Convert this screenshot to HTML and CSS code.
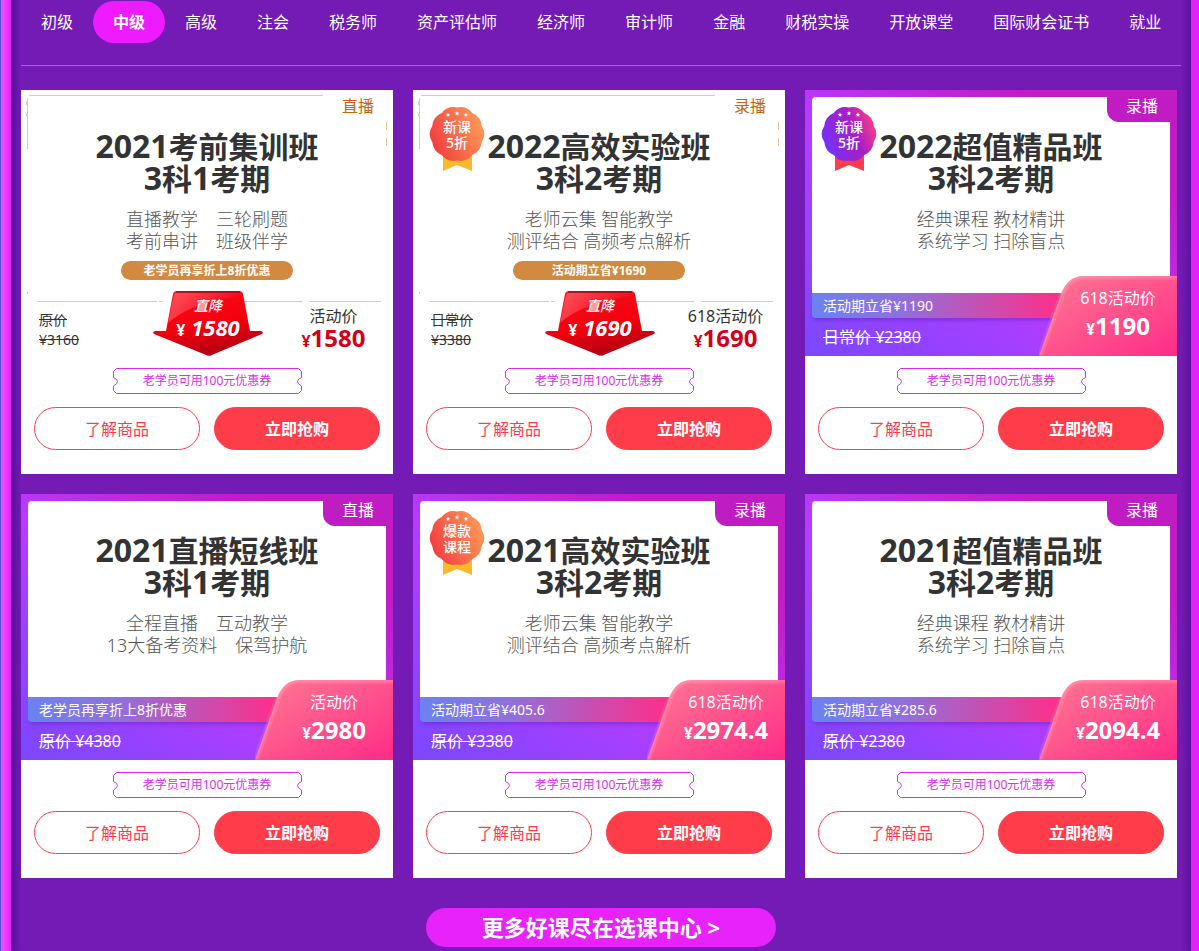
FILE: index.html
```html
<!DOCTYPE html>
<html lang="zh-CN">
<head>
  <meta charset="utf-8">
  <title>课程中心</title>
  <link rel="stylesheet" href="styles.css">
</head>
<body>
  <!-- shared shapes -->
  <svg class="defs" width="0" height="0" aria-hidden="true">
    <defs>
      <linearGradient id="orange" x1="0" y1="0.7" x2="1" y2="0.3">
        <stop offset="0" stop-color="#f23a3f"/>
        <stop offset="1" stop-color="#ff9c57"/>
      </linearGradient>
      <linearGradient id="violet" x1="0" y1="0.7" x2="1" y2="0.3">
        <stop offset="0" stop-color="#6f35f8"/>
        <stop offset="0.6" stop-color="#a81cc8"/>
        <stop offset="1" stop-color="#ff4280"/>
      </linearGradient>
      <linearGradient id="red" x1="0" y1="0" x2="0.3" y2="1">
        <stop offset="0" stop-color="#f5101c"/>
        <stop offset="0.6" stop-color="#f5000f"/>
        <stop offset="1" stop-color="#b80012"/>
      </linearGradient>
      <linearGradient id="shine" x1="0" y1="0" x2="1" y2="0.4">
        <stop offset="0" stop-color="#ff5560"/>
        <stop offset="1" stop-color="#f5000f"/>
      </linearGradient>
      <linearGradient id="pink" x1="0" y1="0" x2="1" y2="1">
        <stop offset="0" stop-color="#ff7a92"/>
        <stop offset="1" stop-color="#ff2c88"/>
      </linearGradient>
      <symbol id="seal" viewBox="0 0 56 65">
        <path d="M14 48H43V65L28 59L14 65Z" fill="currentColor"/>
        <path d="M52.700 36Q52 45.400 43.300 49Q37.300 56.500 28 54.500Q18.700 56.500 12.700 49Q4 45.400 3.300 36Q-2 28 3.300 20Q4 10.600 12.700 7Q18.700 -.5 28 1.500Q37.300 -.5 43.300 7Q52 10.600 52.700 20Q58 28 52.700 36Z" stroke-linejoin="round"/>
        <path d="M19 6.500l.7 1.400 1.500.2-1.100 1 .3 1.600-1.400-.8-1.400.8.3-1.600-1.100-1 1.500-.2zM28 5l.7 1.400 1.500.2-1.100 1 .3 1.600-1.400-.8-1.400.8.3-1.600-1.100-1 1.500-.2zM37 6.500l.7 1.400 1.500.2-1.100 1 .3 1.600-1.400-.8-1.400.8.3-1.600-1.100-1 1.500-.2z" fill="#fff"/>
      </symbol>
      <symbol id="drop" viewBox="0 0 110 65">
        <path d="M24 0H86Q89 0 90 3L97 40H108Q111 41 109 43L60 63.500Q56 66 52 63.500L1 43Q-1 41 2 40H13L20 3Q21 0 24 0Z" fill="url(#red)"/>
        <path d="M24 1H86Q88 1 89 4C60 10 36 14 15 32L21 4Q22 1 24 1Z" fill="url(#shine)"/>
        <path d="M23 1H87" stroke="#9d0a18" stroke-width="1.500"/>
      </symbol>
      <symbol id="ticket" viewBox="0 0 189 26">
        <path d="M.5 9.500V3.500L3.500 .5H185.500L188.500 3.500V9.500Q184.500 11 184.500 13.500T188.500 18V22.500L185.500 25.500H3.500L.5 22.500V18Q4.500 16 4.500 13.500T.5 9.500Z" fill="none" stroke="#da2cf0"/>
      </symbol>
      <symbol id="flag" viewBox="0 0 138 80">
        <path d="M0 80L22 18Q29 0 44 0H138V80Z" fill="url(#pink)"/>
        <path d="M1 79L23 18Q30 1 45 1H138" fill="none" stroke="#fff" stroke-opacity="0.1" stroke-width="6"/>
        <path d="M1 79L23 18Q30 1 45 1H138" fill="none" stroke="#fff" stroke-opacity="0.1" stroke-width="2"/>
      </symbol>
      <symbol id="frame" viewBox="0 0 372 266" preserveAspectRatio="none">
        <path d="M8 5.500H302M6.500 8V59M5.500 11V15M5.500 24V26M365.500 32V40M365.500 48V56M6.500 202V204M16 211.500H136M138 211.500H142M222 211.500H281M288 211.500H360" fill="none" stroke="#f2c596"/>
      </symbol>
    </defs>
  </svg>

  <main class="page">
    <nav class="levels">
      <a href="#">初级</a>
      <a href="#" class="active">中级</a>
      <a href="#">高级</a>
      <a href="#">注会</a>
      <a href="#">税务师</a>
      <a href="#">资产评估师</a>
      <a href="#">经济师</a>
      <a href="#">审计师</a>
      <a href="#">金融</a>
      <a href="#">财税实操</a>
      <a href="#">开放课堂</a>
      <a href="#">国际财会证书</a>
      <a href="#">就业</a>
    </nav>

    <section class="courses">
      <article class="card gold">
        <div class="promo">
          <svg class="frame"><use href="#frame"/></svg>
          <span class="type">直播</span>
          <div class="sheet">
            <h2><span class="n">2021</span>考前集训班<br><span class="n">3</span>科<span class="n">1</span>考期</h2>
            <p class="desc">直播教学　三轮刷题<br>考前串讲　班级伴学</p>
            <p class="pill">老学员再享折上8折优惠</p>
          </div>
          <div class="prices">
            <del>原价<br>¥3160</del>
            <div class="drop">
              <svg><use href="#drop"/></svg>
              <span>直降</span>
              <strong><small>¥</small> 1580</strong>
            </div>
            <div class="now"><span>活动价</span><strong><small>¥</small>1580</strong></div>
          </div>
        </div>
        <div class="coupon"><svg><use href="#ticket"/></svg><span>老学员可用100元优惠券</span></div>
        <div class="actions">
          <button type="button" class="info">了解商品</button>
          <button type="button" class="buy">立即抢购</button>
        </div>
      </article>

      <article class="card gold">
        <div class="promo">
          <svg class="frame"><use href="#frame"/></svg>
          <span class="type">录播</span>
          <div class="badge"><svg><use href="#seal"/></svg><span>新课<br>5折</span></div>
          <div class="sheet">
            <h2><span class="n">2022</span>高效实验班<br><span class="n">3</span>科<span class="n">2</span>考期</h2>
            <p class="desc">老师云集 智能教学<br>测评结合 高频考点解析</p>
            <p class="pill">活动期立省¥1690</p>
          </div>
          <div class="prices">
            <del>日常价<br>¥3380</del>
            <div class="drop">
              <svg><use href="#drop"/></svg>
              <span>直降</span>
              <strong><small>¥</small> 1690</strong>
            </div>
            <div class="now"><span>618活动价</span><strong><small>¥</small>1690</strong></div>
          </div>
        </div>
        <div class="coupon"><svg><use href="#ticket"/></svg><span>老学员可用100元优惠券</span></div>
        <div class="actions">
          <button type="button" class="info">了解商品</button>
          <button type="button" class="buy">立即抢购</button>
        </div>
      </article>

      <article class="card">
        <div class="promo">
          <span class="type">录播</span>
          <div class="badge purple"><svg><use href="#seal"/></svg><span>新课<br>5折</span></div>
          <div class="sheet">
            <h2><span class="n">2022</span>超值精品班<br><span class="n">3</span>科<span class="n">2</span>考期</h2>
            <p class="desc">经典课程 教材精讲<br>系统学习 扫除盲点</p>
          </div>
          <p class="strip">活动期立省¥1190</p>
          <del>日常价 ¥2380</del>
          <div class="flag">
            <svg><use href="#flag"/></svg>
            <div class="now"><span>618活动价</span><strong><small>¥</small>1190</strong></div>
          </div>
        </div>
        <div class="coupon"><svg><use href="#ticket"/></svg><span>老学员可用100元优惠券</span></div>
        <div class="actions">
          <button type="button" class="info">了解商品</button>
          <button type="button" class="buy">立即抢购</button>
        </div>
      </article>

      <article class="card">
        <div class="promo">
          <span class="type">直播</span>
          <div class="sheet">
            <h2><span class="n">2021</span>直播短线班<br><span class="n">3</span>科<span class="n">1</span>考期</h2>
            <p class="desc">全程直播　互动教学<br>13大备考资料　保驾护航</p>
          </div>
          <p class="strip">老学员再享折上8折优惠</p>
          <del>原价 ¥4380</del>
          <div class="flag">
            <svg><use href="#flag"/></svg>
            <div class="now"><span>活动价</span><strong><small>¥</small>2980</strong></div>
          </div>
        </div>
        <div class="coupon"><svg><use href="#ticket"/></svg><span>老学员可用100元优惠券</span></div>
        <div class="actions">
          <button type="button" class="info">了解商品</button>
          <button type="button" class="buy">立即抢购</button>
        </div>
      </article>

      <article class="card">
        <div class="promo">
          <span class="type">录播</span>
          <div class="badge"><svg><use href="#seal"/></svg><span>爆款<br>课程</span></div>
          <div class="sheet">
            <h2><span class="n">2021</span>高效实验班<br><span class="n">3</span>科<span class="n">2</span>考期</h2>
            <p class="desc">老师云集 智能教学<br>测评结合 高频考点解析</p>
          </div>
          <p class="strip">活动期立省¥405.6</p>
          <del>原价 ¥3380</del>
          <div class="flag">
            <svg><use href="#flag"/></svg>
            <div class="now"><span>618活动价</span><strong><small>¥</small>2974.4</strong></div>
          </div>
        </div>
        <div class="coupon"><svg><use href="#ticket"/></svg><span>老学员可用100元优惠券</span></div>
        <div class="actions">
          <button type="button" class="info">了解商品</button>
          <button type="button" class="buy">立即抢购</button>
        </div>
      </article>

      <article class="card">
        <div class="promo">
          <span class="type">录播</span>
          <div class="sheet">
            <h2><span class="n">2021</span>超值精品班<br><span class="n">3</span>科<span class="n">2</span>考期</h2>
            <p class="desc">经典课程 教材精讲<br>系统学习 扫除盲点</p>
          </div>
          <p class="strip">活动期立省¥285.6</p>
          <del>原价 ¥2380</del>
          <div class="flag">
            <svg><use href="#flag"/></svg>
            <div class="now"><span>618活动价</span><strong><small>¥</small>2094.4</strong></div>
          </div>
        </div>
        <div class="coupon"><svg><use href="#ticket"/></svg><span>老学员可用100元优惠券</span></div>
        <div class="actions">
          <button type="button" class="info">了解商品</button>
          <button type="button" class="buy">立即抢购</button>
        </div>
      </article>
    </section>

    <a href="#" class="more">更多好课尽在选课中心 &gt;</a>
  </main>
</body>
</html>
```
FILE: styles.css
```css
* {
  box-sizing: border-box;
}

body {
  margin: 0;
  padding: 0 8px 0 10px;
  border-left: 1px solid #4a50d8;
  background: linear-gradient(90deg, #f55cf8, #ea22ff 10px, #e620fb);
  font-family: "Noto Sans", "Noto Sans CJK SC", sans-serif;
  font-size: 16px;
}

h2,
p {
  margin: 0;
}

a {
  color: #fff;
  text-decoration: none;
}

.defs {
  position: absolute;
}

.page {
  display: flex;
  flex-direction: column;
  min-height: 100vh;
  padding: 1px 10px 4px;
  background: linear-gradient(90deg, #521394, #741ab5 10px, #741ab5 calc(100% - 10px), #5a1499);
}

/* navigation */
.levels {
  display: flex;
  justify-content: space-between;
  height: 65px;
  border-bottom: 1px solid #a562d0;
}

.levels a {
  height: 42px;
  padding: 0 20px;
  border-radius: 21px;
  line-height: 42px;
  white-space: nowrap;
}

.levels .active {
  background: #ee1bff;
  font-weight: bold;
}

/* course cards */
.courses {
  display: grid;
  grid-template-columns: repeat(3, 1fr);
  gap: 20px;
  margin: 24px 4px 0 0;
}

.card {
  padding-bottom: 24px;
  background: #fff;
}

.promo {
  position: relative;
  display: flex;
  flex-direction: column;
  height: 266px;
  padding: 7px 7px 0;
  background: linear-gradient(to top right, #7a48ff, #b83bff 45%, #c01cc4 80%);
  color: #fff;
}

.sheet {
  flex: 1;
  padding-top: 34px;
  border-radius: 4px 4px 0 0;
  background: #fff;
  text-align: center;
}

.sheet h2 {
  color: #333;
  font-size: 30px;
  line-height: 32px;
}

.sheet .n {
  font-size: 32px;
  line-height: 30px;
}

.desc {
  margin-top: 13px;
  color: #555;
  font-size: 18px;
  font-weight: 300;
  line-height: 22px;
}

.type {
  position: absolute;
  top: 0;
  right: 0;
  width: 70px;
  height: 32px;
  border-bottom-left-radius: 12px;
  background: #c01cc4;
  line-height: 32px;
  text-align: center;
}

.strip {
  height: 25px;
  padding-left: 11px;
  border-radius: 0 0 4px 4px;
  background: linear-gradient(90deg, #6b82f2, #8f70dc 25%, #ff2e88 70%);
  box-shadow: 0 4px 4px -2px rgba(80, 20, 160, 0.4);
  font-size: 14px;
  line-height: 25px;
}

.promo > del {
  padding-left: 11px;
  line-height: 38px;
}

.badge {
  position: absolute;
  top: 16px;
  left: 16px;
  width: 56px;
  height: 65px;
  padding-top: 13px;
  color: #f8ba28;
  fill: url(#orange);
}

.badge.purple {
  color: #ff3b4c;
  fill: url(#violet);
}

.badge svg,
.drop svg,
.coupon svg,
.flag svg,
.frame {
  position: absolute;
  top: 0;
  left: 0;
  width: 100%;
  height: 100%;
}

.badge span {
  position: relative;
  display: block;
  color: #fff;
  font-size: 14px;
  font-weight: 500;
  line-height: 16px;
  text-align: center;
}

.flag {
  position: absolute;
  right: 0;
  bottom: 0;
  width: 138px;
  height: 80px;
  padding: 8px 0 0 20px;
}

.now {
  position: relative;
  display: flex;
  flex-direction: column;
  align-items: center;
}

.now span,
.now strong {
  line-height: 28px;
}

.now strong {
  font-size: 24px;
}

.now small {
  font-size: 16px;
}

/* white card with gold lines */
.gold .promo {
  background: #fff;
  color: #333;
}

.gold .sheet {
  flex: none;
  background: none;
}

.gold .type {
  background: none;
  color: #c4640f;
}

.pill {
  width: 172px;
  height: 19px;
  margin: 9px auto 0;
  border-radius: 10px;
  background: #d28a40;
  color: #fff;
  font-size: 12px;
  font-weight: bold;
  line-height: 19px;
}

.prices {
  display: grid;
  grid-template-columns: 114px 110px 1fr;
  margin-top: 11px;
  padding-left: 11px;
}

.prices del {
  padding-top: 19px;
  font-size: 14px;
  line-height: 20px;
}

.prices .now {
  padding: 14px 0 0 18px;
}

.prices .now span,
.prices .now strong {
  line-height: 22px;
}

.prices .now strong {
  color: #d0021b;
}

.drop {
  position: relative;
  display: flex;
  flex-direction: column;
  align-items: center;
  height: 65px;
  padding-top: 5px;
  color: #fff;
  font-style: italic;
}

.drop span,
.drop strong {
  position: relative;
  line-height: 20px;
}

.drop span {
  font-size: 14px;
  font-weight: 500;
}

.drop strong {
  font-size: 22px;
  line-height: 22px;
}

.drop small {
  font-size: 16px;
  font-style: normal;
}

/* coupon and buttons */
.coupon {
  position: relative;
  width: 189px;
  height: 26px;
  margin: 12px auto 13px;
  color: #da2cf0;
  font-size: 12px;
  line-height: 26px;
  text-align: center;
}

.actions {
  display: flex;
  gap: 14px;
  padding: 0 13px;
}

.actions button {
  flex: 1;
  height: 43px;
  padding: 0 0 2px;
  border: 1px solid #ff3d4a;
  border-radius: 22px;
  font-family: inherit;
  font-size: 16px;
  cursor: pointer;
}

.actions .info {
  background: #fff;
  color: #ff3d4a;
}

.actions .buy {
  background: #ff3d4a;
  color: #fff;
  font-weight: bold;
}

.more {
  align-self: center;
  width: 350px;
  height: 39px;
  margin-top: 30px;
  border-radius: 20px;
  background: #e822fa;
  font-size: 22px;
  font-weight: bold;
  line-height: 39px;
  text-align: center;
}
```
